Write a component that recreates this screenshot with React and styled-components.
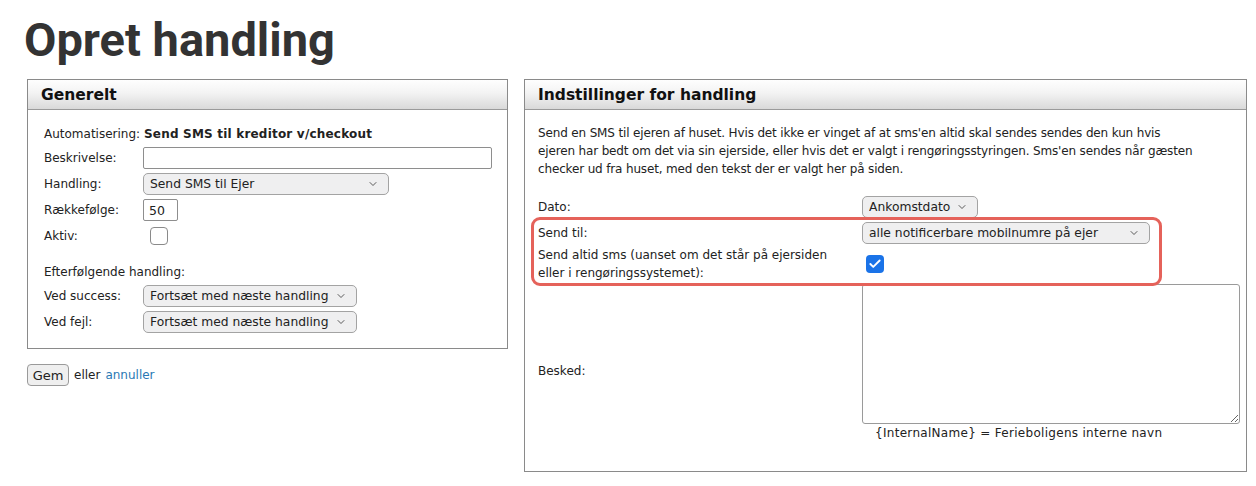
import React from 'react'
import styled, { createGlobalStyle } from 'styled-components'
import { ChevronDown, Check } from 'lucide-react'

const GlobalStyle = createGlobalStyle`
  body {
    margin: 0;
    background: #fff;
    color: #222;
    font-family: "DejaVu Sans", Verdana, sans-serif;
    font-size: 12px;
  }
`

const Select = ({ value, width }) => (
  <SelectWrap $width={width}>
    <NativeSelect defaultValue={value}>
      <option>{value}</option>
    </NativeSelect>
    <Chevron size={12} strokeWidth={1.6} />
  </SelectWrap>
)

const Checkbox = ({ checked, offset }) => (
  <Box $checked={checked} $offset={offset}>
    {checked && <Check size={14} strokeWidth={3.2} color='#fff' />}
  </Box>
)

const App = () => {
  return (
    <Page>
      <GlobalStyle />
      <Title>Opret handling</Title>
      <Columns>
        <div>
          <Panel>
            <PanelHeader>Generelt</PanelHeader>
            <LeftBody>
              <Row $label={99} $tall={18}>
                <Label>Automatisering:</Label>
                <Strong>Send SMS til kreditor v/checkout</Strong>
              </Row>
              <Row $label={99}>
                <Label>Beskrivelse:</Label>
                <TextInput $width={349} />
              </Row>
              <Row $label={99}>
                <Label>Handling:</Label>
                <Select value='Send SMS til Ejer' width={246} />
              </Row>
              <Row $label={99}>
                <Label>Rækkefølge:</Label>
                <TextInput $width={35} defaultValue='50' />
              </Row>
              <Row $label={99}>
                <Label>Aktiv:</Label>
                <Checkbox offset={7} />
              </Row>
              <SubHeading>Efterfølgende handling:</SubHeading>
              <Row $label={99}>
                <Label>Ved success:</Label>
                <Select value='Fortsæt med næste handling' width={214} />
              </Row>
              <Row $label={99}>
                <Label>Ved fejl:</Label>
                <Select value='Fortsæt med næste handling' width={214} />
              </Row>
            </LeftBody>
          </Panel>
          <Actions>
            <Button>Gem</Button>
            <span>eller</span>
            <Link href='#'>annuller</Link>
          </Actions>
        </div>

        <Panel>
          <PanelHeader>Indstillinger for handling</PanelHeader>
          <RightBody>
            <Description>
              Send en SMS til ejeren af huset. Hvis det ikke er vinget af at sms'en altid skal sendes sendes den kun hvis<br />
              ejeren har bedt om det via sin ejerside, eller hvis det er valgt i rengøringsstyringen. Sms'en sendes når gæsten<br />
              checker ud fra huset, med den tekst der er valgt her på siden.
            </Description>
            <Row $label={324}>
              <Label>Dato:</Label>
              <Select value='Ankomstdato' width={116} />
            </Row>
            <Highlight>
              <Row $label={324}>
                <Label>Send til:</Label>
                <Select value='alle notificerbare mobilnumre på ejer' width={288} />
              </Row>
              <Row $label={324} $gap={3}>
                <Label>Send altid sms (uanset om det står på ejersiden<br />eller i rengøringssystemet):</Label>
                <Checkbox checked offset={4} />
              </Row>
            </Highlight>
            <MessageRow>
              <MessageLabel>Besked:</MessageLabel>
              <div>
                <TextArea />
                <Hint>{'{InternalName}'} = Ferieboligens interne navn</Hint>
              </div>
            </MessageRow>
          </RightBody>
        </Panel>
      </Columns>
    </Page>
  )
}

export default App

const Page = styled.div`
  padding: 0 27px;
`

const Title = styled.h1`
  margin: 12px 0 11px -3px;
  font-family: Roboto, "Liberation Sans", sans-serif;
  font-weight: 700;
  font-size: 47px;
  line-height: 56px;
  color: #333;
`

const Columns = styled.div`
  display: grid;
  grid-template-columns: 481px 723px;
  gap: 16px;
  align-items: start;
`

const Panel = styled.section`
  border: 1px solid #8a8a8a;
  background: #fff;
`

const PanelHeader = styled.h2`
  margin: 0;
  height: 29px;
  padding-left: 13px;
  display: flex;
  align-items: center;
  border-bottom: 1px solid #9a9a9a;
  background: linear-gradient(#fefefe 0%, #f3f3f3 45%, #d9d9d9 100%);
  font-family: "DejaVu Sans", Verdana, sans-serif;
  font-size: 15.5px;
  font-weight: 700;
  color: #111;
`

const LeftBody = styled.div`
  padding: 15px 16px 15px 16px;
  display: flex;
  flex-direction: column;
  gap: 4px;
`

const RightBody = styled.div`
  padding: 14px 6px 29px 13px;
  display: flex;
  flex-direction: column;
  gap: 4px;
`

const Row = styled.div`
  display: grid;
  grid-template-columns: ${p => p.$label}px 1fr;
  align-items: center;
  min-height: ${p => p.$tall || 22}px;
  line-height: 18px;
  margin-top: ${p => p.$gap ? p.$gap - 4 : 0}px;
`

const Label = styled.div`
  line-height: 18px;
`

const Strong = styled.div`
  font-weight: 700;
  padding-left: 1px;
  letter-spacing: 0.2px;
`

const SubHeading = styled.div`
  margin-top: 12px;
  line-height: 18px;
`

const TextInput = styled.input`
  box-sizing: border-box;
  width: ${p => p.$width}px;
  height: 22px;
  padding: 0 5px;
  border: 1px solid #8e8e8e;
  border-radius: 2px;
  font-family: inherit;
  font-size: 12.5px;
  color: #222;
  outline: none;
`

const SelectWrap = styled.div`
  position: relative;
  width: ${p => p.$width}px;
  height: 22px;
`

const NativeSelect = styled.select`
  appearance: none;
  box-sizing: border-box;
  width: 100%;
  height: 100%;
  padding: 0 20px 0 6px;
  border: 1px solid #a3a3a3;
  border-radius: 5px;
  background: #efeff0;
  font-family: inherit;
  font-size: 12.3px;
  color: #222;
  outline: none;
`

const Chevron = styled(ChevronDown)`
  position: absolute;
  right: 10px;
  top: 5px;
  color: #333;
  pointer-events: none;
`

const Box = styled.span`
  box-sizing: border-box;
  width: 18px;
  height: 18px;
  margin-left: ${p => p.$offset || 0}px;
  display: flex;
  align-items: center;
  justify-content: center;
  border-radius: 4px;
  border: ${p => p.$checked ? 'none' : '1px solid #8a8a8a'};
  background: ${p => p.$checked ? '#1a73e8' : '#fff'};
`

const Actions = styled.div`
  margin-top: 15px;
  display: flex;
  align-items: center;
  gap: 5px;
  font-size: 12px;
`

const Button = styled.button`
  height: 22px;
  width: 42px;
  padding: 0;
  border: 1px solid #9a9a9a;
  border-radius: 4px;
  background: #efefef;
  font-family: inherit;
  font-size: 13px;
  color: #222;
`

const Link = styled.a`
  color: #2a78b4;
  text-decoration: none;
`

const Description = styled.p`
  margin: 0 0 14px 0;
  line-height: 18px;
  letter-spacing: -0.15px;
`

const Highlight = styled.div`
  box-sizing: border-box;
  width: 631px;
  margin: -5px 0 -4px -7px;
  padding: 2px 0 1px 4px;
  border: 3px solid #e5625a;
  border-radius: 9px;
  display: flex;
  flex-direction: column;
  gap: 3px;
  position: relative;
  z-index: 1;
`

const MessageRow = styled.div`
  display: grid;
  grid-template-columns: 324px 1fr;
  margin-top: -2px;
`

const MessageLabel = styled.div`
  align-self: center;
  padding-top: 16px;
`

const TextArea = styled.textarea`
  display: block;
  box-sizing: border-box;
  width: 378px;
  height: 140px;
  border: 1px solid #9a9a9a;
  border-radius: 3px;
  outline: none;
`

const Hint = styled.div`
  padding-left: 13px;
  line-height: 18px;
  letter-spacing: 0.3px;
`
